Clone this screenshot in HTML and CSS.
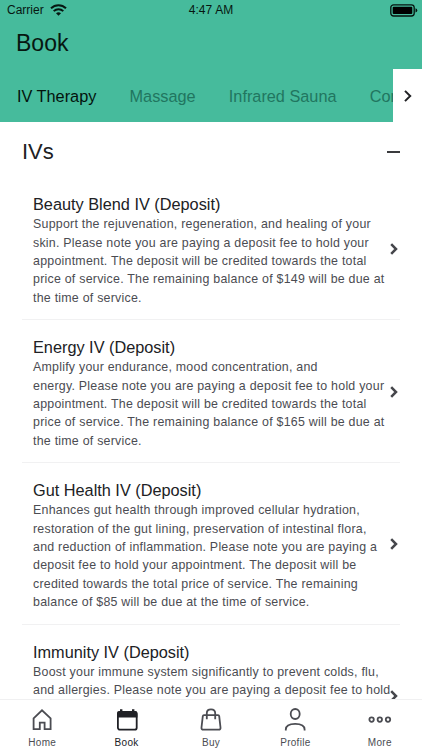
FILE: index.html
```html
<!DOCTYPE html>
<html lang="en">
<head>
  <meta charset="UTF-8">
  <title>Book</title>
  <link rel="stylesheet" href="styles.css">
</head>

<body>
  <header class="header">
    <div class="status-bar">
      <div class="carrier">
        <span>Carrier</span>
        <svg width="17" height="12" viewBox="0 0 17 12" fill="none" stroke="#061711" stroke-width="2">
          <path d="M1 4.3C5.2 .1 11.8 .1 16 4.3M3.7 7.1C6.4 4.5 10.6 4.5 13.3 7.1"/>
          <path d="M6 9.2Q8.5 7.1 11 9.2L8.5 11.8Z" fill="#061711" stroke="none"/>
        </svg>
      </div>
      <span class="clock">4:47 AM</span>
      <svg class="battery" width="28" height="13" viewBox="0 0 28 13">
        <rect x=".8" y=".8" width="23.4" height="11.2" rx="2.8" fill="none" stroke="#04130e" stroke-width="1.3"/>
        <rect x="2.7" y="2.7" width="19.6" height="7.4" rx="1" fill="#000"/>
        <path d="M25.5 4.2Q27.3 4.8 27.3 6.4Q27.3 8 25.5 8.6Z" fill="#04130e"/>
      </svg>
    </div>
    <h1 class="page-title">Book</h1>
    <nav class="tabs">
      <div class="tab-list">
        <span class="tab active">IV Therapy</span>
        <span class="tab">Massage</span>
        <span class="tab">Infrared Sauna</span>
        <span class="tab">Con</span>
      </div>
      <div class="tab-next">
        <svg width="8" height="12" viewBox="0 0 8 12" fill="none" stroke="#202124" stroke-width="2"><path d="M1 .9L6.2 6L1 11.1"/></svg>
      </div>
    </nav>
  </header>

  <main class="content">
    <div class="section-head">
      <h2 class="section-title">IVs</h2>
      <span class="collapse"></span>
    </div>

    <ul class="services">
      <li class="service">
        <div class="service-text">
          <h3 class="service-name">Beauty Blend IV (Deposit)</h3>
          <p class="service-desc">Support the rejuvenation, regeneration, and healing of your<br>skin. Please note you are paying a deposit fee to hold your<br>appointment. The deposit will be credited towards the total<br>price of service. The remaining balance of $149 will be due at<br>the time of service.</p>
        </div>
        <svg class="chevron" width="8" height="12" viewBox="0 0 8 12"><path d="M1.2 1.2L6 6L1.2 10.8"/></svg>
      </li>
      <li class="service">
        <div class="service-text">
          <h3 class="service-name">Energy IV (Deposit)</h3>
          <p class="service-desc">Amplify your endurance, mood concentration, and<br>energy. Please note you are paying a deposit fee to hold your<br>appointment. The deposit will be credited towards the total<br>price of service. The remaining balance of $165 will be due at<br>the time of service.</p>
        </div>
        <svg class="chevron" width="8" height="12" viewBox="0 0 8 12"><path d="M1.2 1.2L6 6L1.2 10.8"/></svg>
      </li>
      <li class="service">
        <div class="service-text">
          <h3 class="service-name">Gut Health IV (Deposit)</h3>
          <p class="service-desc">Enhances gut health through improved cellular hydration,<br>restoration of the gut lining, preservation of intestinal flora,<br>and reduction of inflammation. Please note you are paying a<br>deposit fee to hold your appointment. The deposit will be<br>credited towards the total price of service. The remaining<br>balance of $85 will be due at the time of service.</p>
        </div>
        <svg class="chevron" width="8" height="12" viewBox="0 0 8 12"><path d="M1.2 1.2L6 6L1.2 10.8"/></svg>
      </li>
      <li class="service">
        <div class="service-text">
          <h3 class="service-name">Immunity IV (Deposit)</h3>
          <p class="service-desc">Boost your immune system significantly to prevent colds, flu,<br>and allergies. Please note you are paying a deposit fee to hold</p>
        </div>
        <svg class="chevron" width="8" height="12" viewBox="0 0 8 12"><path d="M1.2 1.2L6 6L1.2 10.8"/></svg>
      </li>
    </ul>
  </main>

  <nav class="bottom-nav">
    <div class="nav-item">
      <svg width="24" height="24" viewBox="0 0 24 24"><path d="M3.6 10.4L12 2.3L20.6 10.4V21.2H14.6V14.6H9.8V21.2H3.6Z"/></svg>
      <span>Home</span>
    </div>
    <div class="nav-item active">
      <svg width="24" height="24" viewBox="0 0 24 24"><rect x="2.9" y="4.2" width="18.8" height="17.5" rx="2"/><path d="M2 9.4V5Q2 3 4 3H5V1.3H7.4V3H17V1.3H19.4V3H20.4Q22.4 3 22.4 5V9.4Z" fill="#202126" stroke="none"/></svg>
      <span>Book</span>
    </div>
    <div class="nav-item">
      <svg width="24" height="24" viewBox="0 0 24 24"><path d="M4.9 7.2H19.1Q20 7.2 20.2 8.2L21.5 19.5Q21.8 21.7 19.6 21.7H4.4Q2.2 21.7 2.5 19.5L3.8 8.2Q4 7.2 4.9 7.2ZM7.8 11.3V5.2Q7.8 1.3 12 1.3Q16.2 1.3 16.2 5.2V11.3"/></svg>
      <span>Buy</span>
    </div>
    <div class="nav-item">
      <svg width="24" height="24" viewBox="0 0 24 24"><ellipse cx="12.2" cy="6" rx="4.5" ry="5"/><path d="M2.8 22.6V21.5Q2.8 15.8 12.2 15.8Q21.6 15.8 21.6 21.5V22.6"/></svg>
      <span>Profile</span>
    </div>
    <div class="nav-item">
      <svg width="24" height="24" viewBox="0 0 24 24"><circle cx="3.6" cy="11.6" r="2.2"/><circle cx="11.8" cy="11.6" r="2.2"/><circle cx="20" cy="11.6" r="2.2"/></svg>
      <span>More</span>
    </div>
  </nav>
</body>
</html>
```

FILE: styles.css
```css
* {
  box-sizing: border-box;
}

body {
  display: flex;
  flex-direction: column;
  height: 750px;
  margin: 0;
  overflow: hidden;
  background: #fff;
  color: #202124;
  font-family: "Liberation Sans", Arial, sans-serif;
}

h1, h2, h3, p, ul {
  margin: 0;
  padding: 0;
  font-weight: normal;
}

svg {
  display: block;
  flex: none;
}

.header {
  flex: none;
  height: 122px;
  background: #46bb9c;
}

.status-bar {
  display: grid;
  grid-template-columns: 1fr auto 1fr;
  align-items: center;
  height: 20px;
  padding: 0 7px;
  color: #061711;
  font-size: 12px;
}

.carrier {
  display: flex;
  align-items: center;
  gap: 6px;
  font-size: 12px;
}

.clock {
  letter-spacing: 0.1px;
}

.battery {
  justify-self: end;
  margin-right: -3px;
}

.page-title {
  height: 49px;
  padding-left: 16px;
  line-height: 46px;
  font-size: 23px;
  color: #061711;
}

.tabs {
  display: flex;
  height: 53px;
}

.tab-list {
  display: flex;
  flex: 1;
  min-width: 0;
  gap: 33.2px;
  padding-left: 17px;
  overflow: hidden;
  line-height: 54px;
  font-size: 16.3px;
  white-space: nowrap;
}

.tab {
  color: #217660;
}

.tab.active {
  color: #03130d;
}

.tab-next {
  display: flex;
  align-items: center;
  justify-content: center;
  width: 29px;
  background: #fff;
}

.content {
  flex: 1;
  min-height: 0;
  padding: 0 22px;
  overflow: hidden;
}

.section-head {
  display: flex;
  align-items: center;
  justify-content: space-between;
  height: 55.4px;
  padding-top: 5px;
}

.section-title {
  font-size: 22px;
}

.collapse {
  width: 13px;
  height: 2px;
  background: #3a3b3e;
}

.services {
  list-style: none;
}

.service {
  display: flex;
  align-items: center;
  min-height: 143px;
  padding: 16px 2px 12.2px 11px;
  border-bottom: 1px solid #f1f1f2;
}

.service-text {
  flex: 1;
  min-width: 0;
  align-self: flex-start;
  white-space: nowrap;
}

.service-name {
  line-height: 22px;
  font-size: 16.3px;
}

.service-desc {
  line-height: 18.33px;
  font-size: 12.4px;
  letter-spacing: 0.24px;
  color: #4b4c52;
}

.chevron {
  margin-bottom: 2.6px;
  fill: none;
  stroke: #45464b;
  stroke-width: 2.5;
}

.bottom-nav {
  display: grid;
  grid-template-columns: repeat(5, 1fr);
  flex: none;
  height: 51px;
  border-top: 1px solid #f0f0f1;
  background: #fff;
}

.nav-item {
  display: flex;
  flex-direction: column;
  align-items: center;
  padding-top: 8px;
  gap: 5px;
  color: #4b4c52;
  font-size: 10px;
  letter-spacing: 0.3px;
  line-height: 12px;
}

.nav-item svg {
  fill: none;
  stroke: #4b4c52;
  stroke-width: 1.8;
}

.nav-item.active {
  color: #202126;
}

.nav-item.active svg {
  stroke: #202126;
}
```
